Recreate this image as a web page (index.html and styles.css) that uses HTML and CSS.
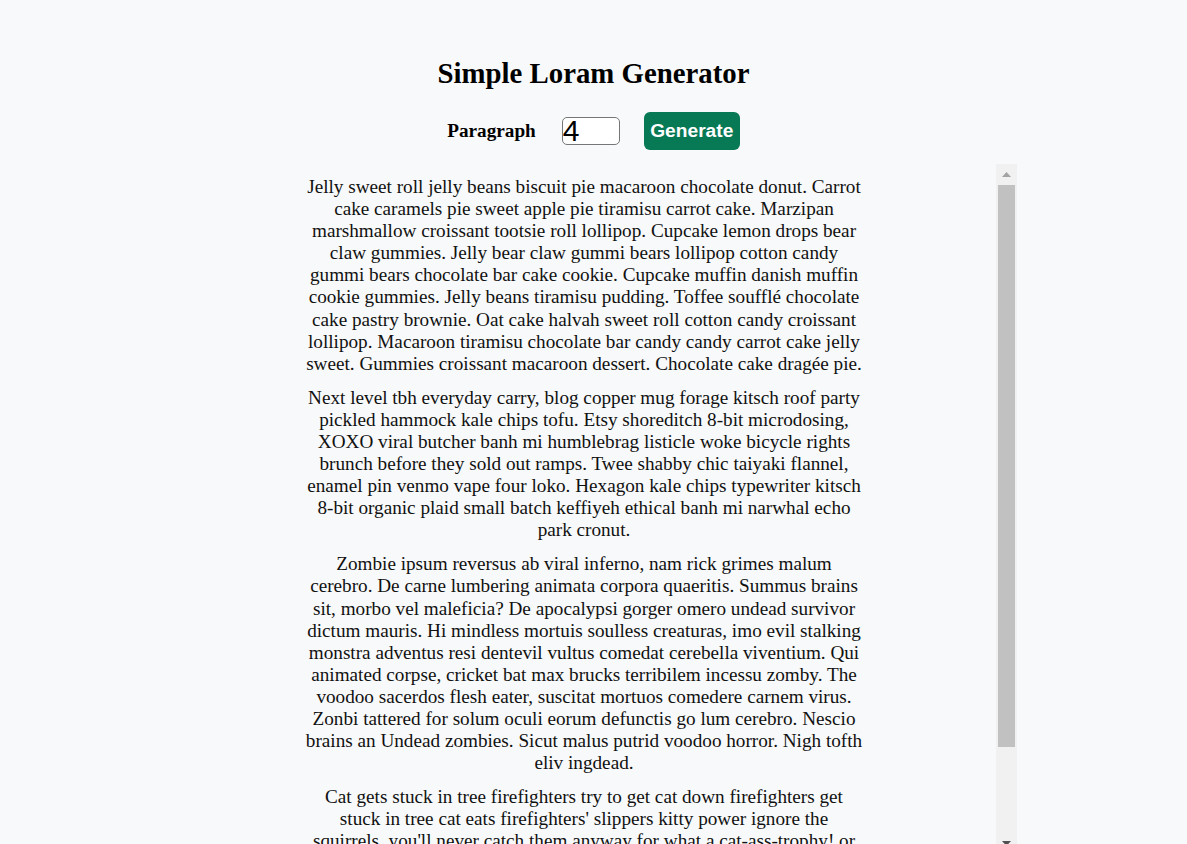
FILE: index.html
```html
<!DOCTYPE html>
<html lang="en">
<head>
<meta charset="utf-8">
<title>Simple Loram Generator</title>
<link rel="stylesheet" href="styles.css">
</head>
<body>
<main class="page">
  <h1 class="title">Simple Loram Generator</h1>
  <form class="controls">
    <label class="label" for="amount">Paragraph</label>
    <input class="amount" id="amount" type="text" value="4">
    <button class="generate" type="button">Generate</button>
  </form>
  <section class="result">
    <div class="viewport">
      <p class="para">Jelly sweet roll jelly beans biscuit pie macaroon chocolate donut. Carrot cake caramels pie sweet apple pie tiramisu carrot cake. Marzipan marshmallow croissant tootsie roll lollipop. Cupcake lemon drops bear claw gummies. Jelly bear claw gummi bears lollipop cotton candy gummi bears chocolate bar cake cookie. Cupcake muffin danish muffin cookie gummies. Jelly beans tiramisu pudding. Toffee soufflé chocolate cake pastry brownie. Oat cake halvah sweet roll cotton candy croissant lollipop. Macaroon tiramisu chocolate bar candy candy carrot cake jelly sweet. Gummies croissant macaroon dessert. Chocolate cake dragée pie.</p>
      <p class="para">Next level tbh everyday carry, blog copper mug forage kitsch roof party pickled hammock kale chips tofu. Etsy shoreditch 8-bit microdosing, XOXO viral butcher banh mi humblebrag listicle woke bicycle rights brunch before they sold out ramps. Twee shabby chic taiyaki flannel, enamel pin venmo vape four loko. Hexagon kale chips typewriter kitsch 8-bit organic plaid small batch keffiyeh ethical banh mi narwhal echo park cronut.</p>
      <p class="para">Zombie ipsum reversus ab viral inferno, nam rick grimes malum cerebro. De carne lumbering animata corpora quaeritis. Summus brains sit, morbo vel maleficia? De apocalypsi gorger omero undead survivor dictum mauris. Hi mindless mortuis soulless creaturas, imo evil stalking monstra adventus resi dentevil vultus comedat cerebella viventium. Qui animated corpse, cricket bat max brucks terribilem incessu zomby. The voodoo sacerdos flesh eater, suscitat mortuos comedere carnem virus. Zonbi tattered for solum oculi eorum defunctis go lum cerebro. Nescio brains an Undead zombies. Sicut malus putrid voodoo horror. Nigh tofth eliv ingdead.</p>
      <p class="para">Cat gets stuck in tree firefighters try to get cat down firefighters get stuck in tree cat eats firefighters' slippers kitty power ignore the squirrels, you'll never catch them anyway for what a cat-ass-trophy! or purr as loud as possible, be the most annoying cat that you can, and, knock everything off the table. Pretend you want to go out but then don't bite off human's toes, yet disappear for four days and return home with an expensive injury; bite the vet so catch eat throw up catch eat throw up bad birds.</p>
    </div>
    <div class="scrollbar" aria-hidden="true">
      <div class="sb-btn">
        <svg width="9" height="5" viewBox="0 0 9 5"><polygon points="4.5,0 9,5 0,5" fill="#a3a3a3"/></svg>
      </div>
      <div class="sb-track">
        <div class="sb-thumb"></div>
      </div>
      <div class="sb-btn">
        <svg width="9" height="5" viewBox="0 0 9 5"><polygon points="0,0 9,0 4.5,5" fill="#505050"/></svg>
      </div>
    </div>
  </section>
</main>
</body>
</html>
```

FILE: styles.css
```css
html, body {
  margin: 0;
  padding: 0;
  overflow: hidden;
  height: 100%;
}

body {
  background: #f8f9fa;
  color: #000;
  font-family: "Liberation Serif", "Times New Roman", serif;
}

.page {
  padding-top: 57px;
  display: flex;
  flex-direction: column;
  align-items: center;
}

.title {
  margin: 0 0 22px;
  font-size: 28.8px;
  font-weight: bold;
  line-height: normal;
  text-align: center;
}

.controls {
  display: flex;
  align-items: center;
  justify-content: center;
  gap: 24px;
  margin: 0 0 14px;
}

.label {
  font-size: 19.2px;
  font-weight: bold;
  margin-right: 2px;
}

.amount {
  box-sizing: border-box;
  width: 58px;
  height: 28px;
  padding: 0;
  border: 1px solid #767676;
  border-radius: 5px;
  background: #fff;
  color: #000;
  font-family: "Liberation Sans", Arial, sans-serif;
  font-size: 30px;
  line-height: 1;
}

.generate {
  box-sizing: border-box;
  height: 38px;
  width: 96px;
  padding: 0;
  border: none;
  border-radius: 6px;
  background: #087955;
  color: #fff;
  font-family: "Liberation Sans", Arial, sans-serif;
  font-size: 19.2px;
  font-weight: bold;
}

.result {
  display: flex;
  width: 847px;
  height: 690px;
  flex-shrink: 0;
}

.viewport {
  flex: 1;
  overflow: hidden;
  padding-top: 0.1px;
  padding-left: 2px;
}

.para {
  width: 560px;
  margin: 12px auto;
  font-size: 19.2px;
  line-height: 22.08px;
  text-align: center;
  color: #111;
}

.scrollbar {
  width: 21px;
  display: flex;
  flex-direction: column;
  background: #f1f1f1;
}

.sb-btn {
  height: 21px;
  display: flex;
  align-items: center;
  justify-content: center;
  flex-shrink: 0;
}

.sb-btn svg {
  display: block;
}

.sb-track {
  flex: 1;
  display: flex;
  flex-direction: column;
}

.sb-thumb {
  height: 562px;
  margin: 0 2px;
  background: #c1c1c1;
}
```
